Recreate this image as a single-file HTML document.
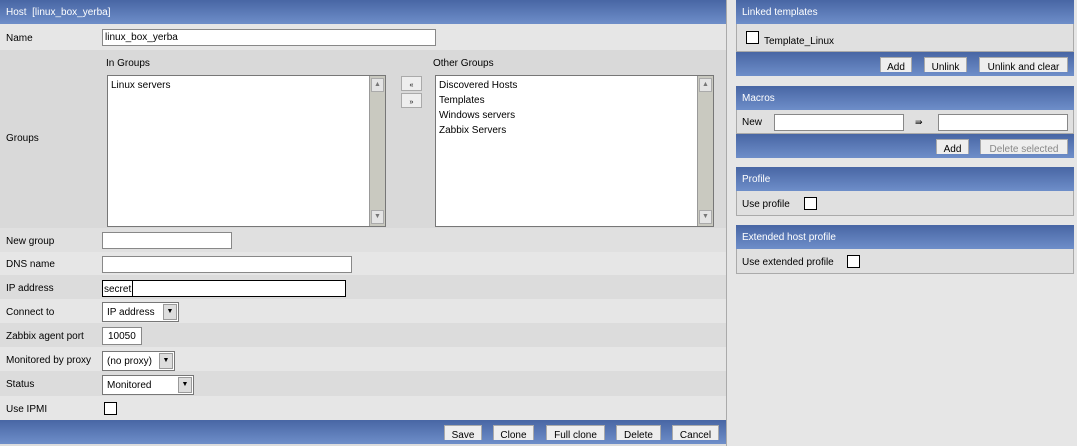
<!DOCTYPE html><html><head><style>
*{box-sizing:border-box;margin:0;padding:0}
body{width:1077px;height:446px;background:#e6e6e6;font-family:"Liberation Sans",sans-serif;font-size:10px;color:#000;position:relative;overflow:hidden}
.a{position:absolute}
.hd{background:linear-gradient(#4866a4,#6e8ec9);color:#fff;font-size:10px;padding:7px 6px 0}
.r{position:absolute;left:0;width:726px}
.l{position:absolute;left:6px}
.in{position:absolute;background:#fff;border:1px solid #888;height:17px;font-size:10px;padding:2px 2px}
.btn{position:absolute;background:#eee;border:1px solid #aaa;border-bottom:0;height:15px;font-size:10px;text-align:center;line-height:19px;overflow:hidden}
.cb{position:absolute;width:13px;height:13px;background:#fff;border:1px solid #000}
.sel{position:absolute;background:#fff;border:1px solid #777;height:20px;font-size:10px;padding:4px 4px}
.sel i{position:absolute;right:1px;top:1px;width:14px;height:16px;background:#ddd;border:1px solid #999;font-style:normal;font-size:7px;text-align:center;line-height:14px}
.lb{position:absolute;background:#fff;border:1px solid #777;font-size:10px;line-height:15px;padding:2px 3px}
.sb{position:absolute;right:0;top:0;bottom:0;width:16px;background:#c9c9c0;border-left:1px solid #999}
.sb b{position:absolute;left:1px;width:13px;height:14px;background:#e4e4e4;border:1px solid #aaa;font-size:7px;text-align:center;line-height:12px;font-weight:normal;color:#777}
</style></head><body>
<div class="a" style="left:0;top:0;width:727px;height:446px;background:#ddd;border-right:1px solid #aaa"></div>
<div class="a hd" style="left:0;top:0;width:726px;height:24px">Host&nbsp; [linux_box_yerba]</div>
<div class="r" style="top:24px;height:26px;background:#e6e6e6"><span class="l" style="top:9px">Name</span></div>
<div class="in" style="left:102px;top:29px;width:334px">linux_box_yerba</div>
<div class="r" style="top:50px;height:178px;background:#d9d9d9"><span class="l" style="top:83px">Groups</span></div>
<div class="a" style="left:106px;top:58px">In Groups</div>
<div class="a" style="left:433px;top:58px">Other Groups</div>
<div class="lb" style="left:107px;top:75px;width:279px;height:152px">Linux servers<div class="sb"><b style="top:2px">▲</b><b style="bottom:2px">▼</b></div></div>
<div class="lb" style="left:435px;top:75px;width:279px;height:152px">Discovered Hosts<br>Templates<br>Windows servers<br>Zabbix Servers<div class="sb"><b style="top:2px">▲</b><b style="bottom:2px">▼</b></div></div>
<div class="btn" style="left:401px;top:76px;width:21px;font-size:7px;border-bottom:1px solid #aaa;line-height:17px">«</div>
<div class="btn" style="left:401px;top:93px;width:21px;font-size:7px;border-bottom:1px solid #aaa;line-height:17px">»</div>
<div class="r" style="top:228px;height:24px;background:#e0e0e0"><span class="l" style="top:8px">New group</span></div>
<div class="in" style="left:102px;top:232px;width:130px"></div>
<div class="r" style="top:252px;height:23px;background:#e6e6e6"><span class="l" style="top:7px">DNS name</span></div>
<div class="in" style="left:102px;top:256px;width:250px"></div>
<div class="r" style="top:275px;height:24px;background:#dcdcdc"><span class="l" style="top:8px">IP address</span></div>
<div class="in" style="left:102px;top:280px;width:244px;border-color:#000;padding:3px 1px"><span style="border-right:1px solid #000;padding-right:1px;display:inline-block;height:15px;margin-top:-3px;padding-top:3px">secret</span></div>
<div class="r" style="top:299px;height:24px;background:#e6e6e6"><span class="l" style="top:8px">Connect to</span></div>
<div class="sel" style="left:102px;top:302px;width:77px">IP address<i>▼</i></div>
<div class="r" style="top:323px;height:24px;background:#dcdcdc"><span class="l" style="top:8px">Zabbix agent port</span></div>
<div class="in" style="left:102px;top:327px;width:40px;height:18px;padding:3px 5px">10050</div>
<div class="r" style="top:347px;height:24px;background:#e6e6e6"><span class="l" style="top:8px">Monitored by proxy</span></div>
<div class="sel" style="left:102px;top:351px;width:73px">(no proxy)<i>▼</i></div>
<div class="r" style="top:371px;height:25px;background:#dcdcdc"><span class="l" style="top:8px">Status</span></div>
<div class="sel" style="left:102px;top:375px;width:92px">Monitored<i>▼</i></div>
<div class="r" style="top:396px;height:24px;background:#e6e6e6"><span class="l" style="top:8px">Use IPMI</span></div>
<div class="cb" style="left:104px;top:402px"></div>
<div class="a hd" style="left:0;top:420px;width:726px;height:24px"></div>
<div class="btn" style="left:444px;top:425px;width:38px">Save</div>
<div class="btn" style="left:493px;top:425px;width:41px">Clone</div>
<div class="btn" style="left:546px;top:425px;width:59px">Full clone</div>
<div class="btn" style="left:616px;top:425px;width:45px">Delete</div>
<div class="btn" style="left:672px;top:425px;width:47px">Cancel</div>

<div class="a hd" style="left:736px;top:0;width:338px;height:24px">Linked templates</div>
<div class="a" style="left:736px;top:24px;width:338px;height:28px;background:#e0e0e0;border:1px solid #aaa;border-top:0"></div>
<div class="cb" style="left:746px;top:31px"></div>
<div class="a" style="left:764px;top:36px">Template_Linux</div>
<div class="a hd" style="left:736px;top:52px;width:338px;height:24px"></div>
<div class="btn" style="left:880px;top:57px;width:32px">Add</div>
<div class="btn" style="left:924px;top:57px;width:43px">Unlink</div>
<div class="btn" style="left:979px;top:57px;width:89px">Unlink and clear</div>
<div class="a hd" style="left:736px;top:86px;width:338px;height:24px">Macros</div>
<div class="a" style="left:736px;top:110px;width:338px;height:24px;background:#e0e0e0;border:1px solid #aaa;border-top:0"></div>
<div class="a" style="left:742px;top:117px">New</div>
<div class="in" style="left:774px;top:114px;width:130px"></div>
<div class="a" style="left:915px;top:117px;font-size:9px">⇛</div>
<div class="in" style="left:938px;top:114px;width:130px"></div>
<div class="a hd" style="left:736px;top:134px;width:338px;height:24px"></div>
<div class="btn" style="left:936px;top:139px;width:33px">Add</div>
<div class="btn" style="left:980px;top:139px;width:88px;color:#888">Delete selected</div>
<div class="a hd" style="left:736px;top:167px;width:338px;height:24px">Profile</div>
<div class="a" style="left:736px;top:191px;width:338px;height:25px;background:#e0e0e0;border:1px solid #aaa;border-top:0"></div>
<div class="a" style="left:742px;top:199px">Use profile</div>
<div class="cb" style="left:804px;top:197px"></div>
<div class="a hd" style="left:736px;top:225px;width:338px;height:24px">Extended host profile</div>
<div class="a" style="left:736px;top:249px;width:338px;height:25px;background:#e0e0e0;border:1px solid #aaa;border-top:0"></div>
<div class="a" style="left:742px;top:257px">Use extended profile</div>
<div class="cb" style="left:847px;top:255px"></div>
</body></html>
